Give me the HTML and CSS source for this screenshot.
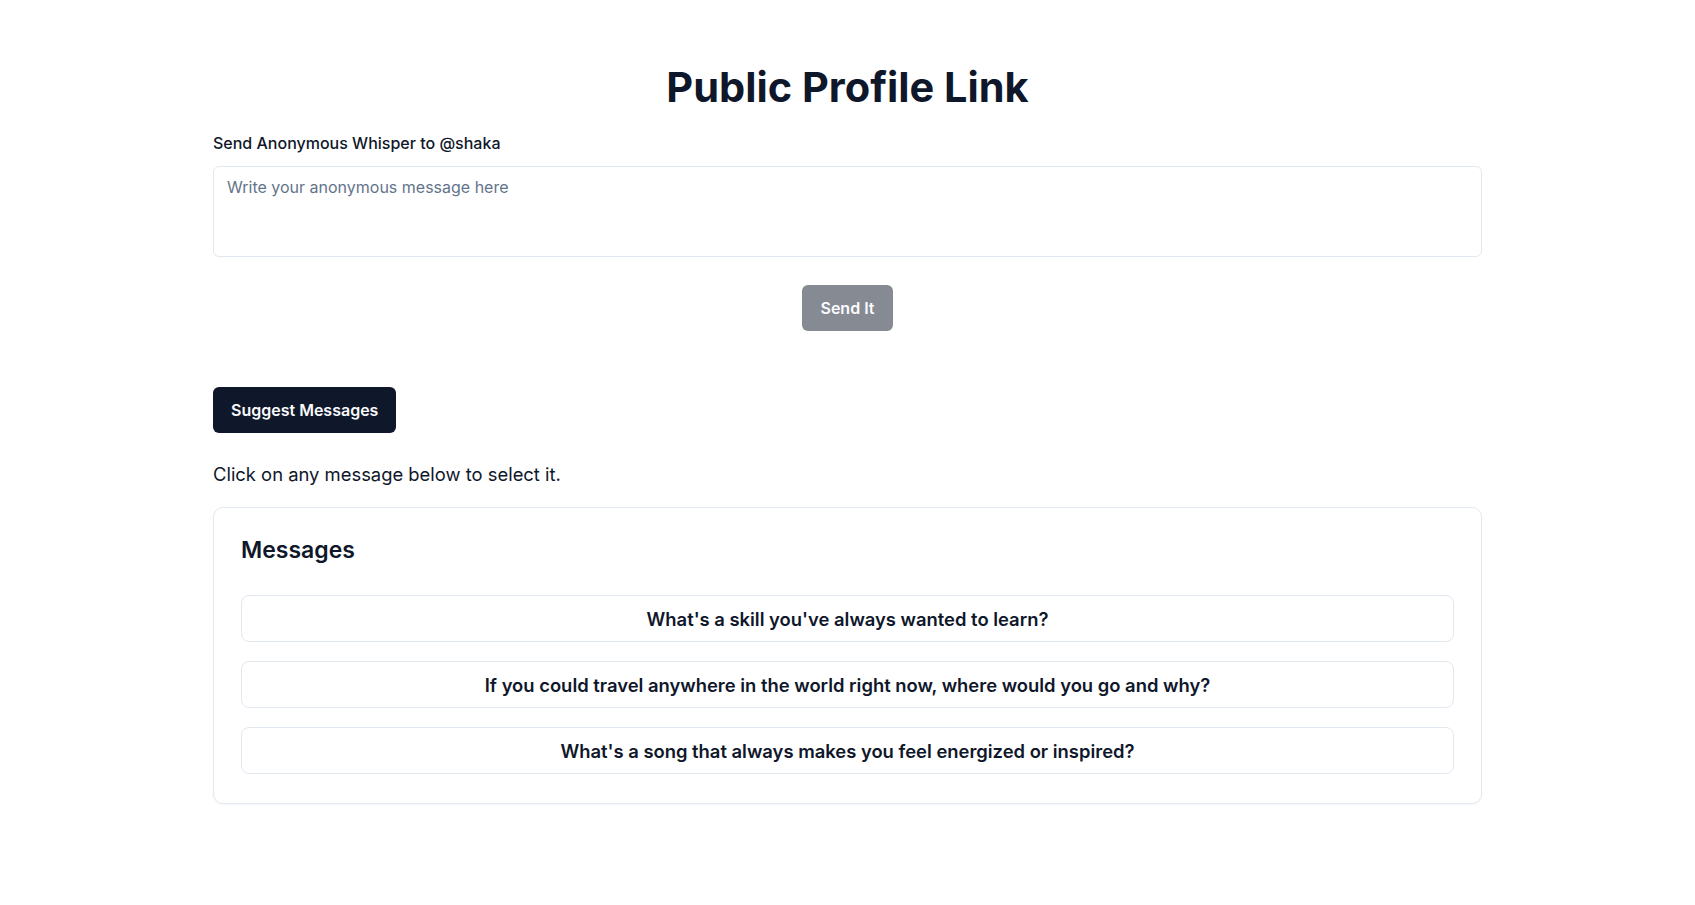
FILE: index.html
```html
<!DOCTYPE html>
<html lang="en">
<head>
    <meta charset="UTF-8">
    <meta name="viewport" content="width=device-width, initial-scale=1.0">
    <title>Public Profile Link</title>
    <link rel="stylesheet" href="styles.css">
</head>
<body>
    <main class="page">
        <h1 class="title">Public Profile Link</h1>

        <form class="whisper-form">
            <label class="field-label" for="message">Send Anonymous Whisper to @shaka</label>
            <textarea class="message-input" id="message" placeholder="Write your anonymous message here"></textarea>
            <div class="form-actions">
                <button class="btn btn-primary" type="submit" disabled>Send It</button>
            </div>
        </form>

        <section class="suggest">
            <button class="btn btn-primary" type="button">Suggest Messages</button>
            <p class="hint">Click on any message below to select it.</p>
        </section>

        <div class="card">
            <h3 class="card-title">Messages</h3>
            <div class="card-content">
                <button class="btn btn-outline" type="button">What's a skill you've always wanted to learn?</button>
                <button class="btn btn-outline" type="button">If you could travel anywhere in the world right now, where would you go and why?</button>
                <button class="btn btn-outline" type="button">What's a song that always makes you feel energized or inspired?</button>
            </div>
        </div>
    </main>
</body>
</html>
```

FILE: styles.css
```css
/* Base */
body {
    margin: 0;
    font-family: Inter, "Noto Sans", sans-serif;
    color: #0f172a;
    background: #fff;
}

.page {
    width: 1269px;
    margin: 0 auto;
    padding: 62px 0 40px;
}

.title {
    margin: 0;
    font-size: 41.5px;
    line-height: 50px;
    font-weight: 700;
    text-align: center;
}

/* Form */
.whisper-form {
    display: flex;
    flex-direction: column;
    margin-top: 19px;
}

.field-label {
    font-size: 16px;
    line-height: 24px;
    font-weight: 500;
}

.message-input {
    box-sizing: border-box;
    height: 91px;
    margin-top: 11px;
    padding: 8px 13px;
    border: 1px solid #e2e8f0;
    border-radius: 6px;
    font-family: inherit;
    font-size: 16px;
    line-height: 24px;
    color: #0f172a;
    resize: none;
    outline: none;
}

.message-input::placeholder {
    color: #64748b;
}

.form-actions {
    display: flex;
    justify-content: center;
    margin-top: 28px;
}

/* Buttons */
.btn {
    box-sizing: border-box;
    display: inline-flex;
    align-items: center;
    justify-content: center;
    font-family: inherit;
    cursor: pointer;
}

.btn-primary {
    height: 46px;
    padding: 0 18px;
    border: none;
    border-radius: 6px;
    background: #0f172a;
    color: #f8fafc;
    font-size: 16px;
    font-weight: 600;
}

.btn-primary:disabled {
    opacity: 0.5;
    cursor: default;
    padding: 0 19px;
}

.btn-outline {
    width: 100%;
    height: 47px;
    border: 1px solid #e2e8f0;
    border-radius: 8px;
    background: #fff;
    color: #0f172a;
    font-size: 18.4px;
    font-weight: 600;
}

/* Suggestions */
.suggest {
    margin-top: 56px;
}

.hint {
    margin: 27px 0 0;
    font-size: 18.4px;
    line-height: 28px;
}

.card {
    margin-top: 19px;
    padding: 26px 27px 29px;
    border: 1px solid #e2e8f0;
    border-radius: 10px;
    box-shadow: 0 1px 2px rgba(0, 0, 0, 0.05);
}

.card-title {
    margin: 0;
    font-size: 23px;
    line-height: 32px;
    font-weight: 600;
}

.card-content {
    display: flex;
    flex-direction: column;
    gap: 19px;
    margin-top: 29px;
}
```
